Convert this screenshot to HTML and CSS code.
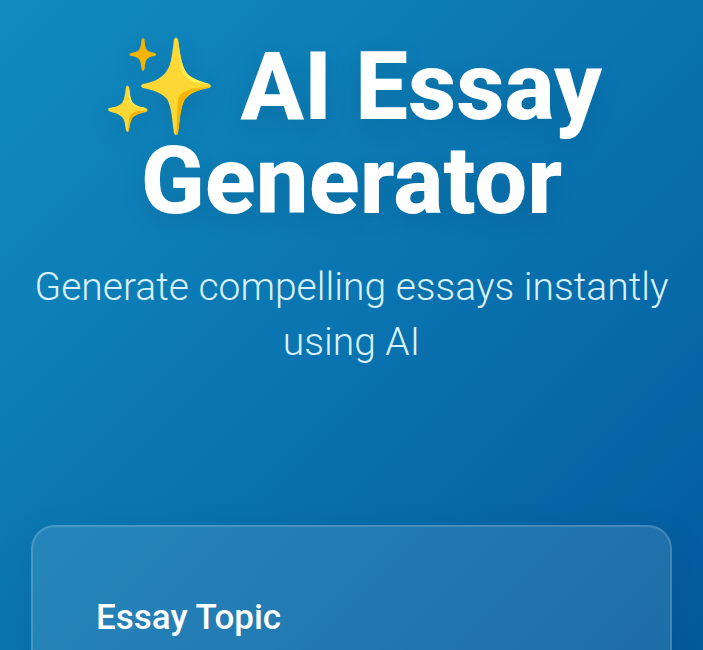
FILE: index.html
```html
<!DOCTYPE html>
<html lang="en">
<head>
<meta charset="utf-8">
<meta name="viewport" content="width=device-width, initial-scale=1">
<title>AI Essay Generator</title>
<link rel="stylesheet" href="styles.css">
</head>
<body>
<main class="page">
  <header class="hero">
    <h1 class="title"><svg class="sparkles" viewBox="0 0 104 100" aria-hidden="true">
      <defs>
        <linearGradient id="shine" x1="0" y1="0" x2="0" y2="1">
          <stop offset="0.2" stop-color="#fdd835"/>
          <stop offset="0.8" stop-color="#fff055"/>
        </linearGradient>
      </defs>
      <path fill="#fdd835" d="M66 3.500Q68-.5 70 3.500C72 17 73 28 78 36C83 43 92 45 101 48Q105 50 101 52C90 54 82 57 77 63C72 72 72 84 70 97Q68 101 66 97C64 84 64 72 59 63C54 57 45 54 35 52Q31 50 35 48C45 46 53 43 58 36C64 28 64 17 66 3.500Z"/>
      <path fill="url(#shine)" d="M70 3.500C72 17 73 28 78 36C83 43 92 45 101 48C91 48 82 46 76 39C70 30 71 15 70 3.500Z"/>
      <path fill="#f4b400" d="M102 51C90 54 82 57 77 63C72 72 72 84 70 97Q69 99 68 99C70 86 68 68 71 61C76 52 90 52 102 51Z"/>
      <path fill="#fdd835" d="M18 51Q19.500 48 21 51C22 58 22 63 25 67C29 71 34 71 38 72Q41 74 38 76C33 77 29 78 25 81C22 85 22 89 21 94Q19.500 98 18 94C17 89 17 84 14 81C10 77 5 77 1 75Q-1 74 1 72C6 71 10 71 14 67C17 62 17 58 18 51Z"/>
      <path fill="#ffee58" d="M21 51C22 58 22 63 25 67C29 71 34 71 38 72C32 73 27 72 23 68C20 63 21 57 21 51Z"/>
      <path fill="#f4b400" d="M39 75C33 77 29 78 25 81C22 85 22 89 21 94L20 96C21 89 20 83 23 78C27 74 33 75 39 75Z"/>
      <path fill="#f4b400" d="M33.500 3.500Q35 1 36.500 3.500C37 8 37 12 39 14C41 16 44 16 47 17Q49 18.500 47 20C44 20 41 21 39 23C37 26 37 29 36.500 33Q35 37 33.500 33C33 29 33 26 31 23C29 21 26 20 23 20Q20 18.500 23 17C26 16 29 16 31 14C33 11 33 8 33.500 3.500Z"/>
    </svg> AI Essay Generator</h1>
    <p class="subtitle">Generate compelling essays instantly using AI</p>
  </header>
  <form class="card">
    <label class="label" for="topic">Essay Topic</label>
    <input class="field" id="topic" type="text">
  </form>
</main>
</body>
</html>
```
FILE: styles.css
```css
* {
  box-sizing: border-box;
}

html {
  height: 100%;
}

body {
  margin: 0;
  height: 100%;
  overflow: hidden;
  font-family: Roboto, "Liberation Sans", sans-serif;
  color: #fff;
  background: linear-gradient(135deg, #118bc0 0%, #0a74b0 50%, #035a9e 100%);
}

.page {
  padding: 40px 31px;
}

.hero {
  text-align: center;
  margin-bottom: 155px;
}

.title {
  margin: 0 0 32px;
  font-size: 94px;
  line-height: 94px;
  font-weight: 800;
  text-shadow: 0 8px 24px rgba(0, 0, 0, 0.1);
}

.sparkles {
  width: 104px;
  height: 100px;
  margin: -6px 5px -4px 7px;
  vertical-align: -13px;
  filter: drop-shadow(0 8px 12px rgba(0, 0, 0, 0.1));
}

.subtitle {
  margin: 0;
  font-size: 39px;
  line-height: 55px;
  font-weight: 300;
  color: #d9f1fc;
}

.card {
  padding: 63px;
  border: 2px solid rgba(255, 255, 255, 0.16);
  border-radius: 24px;
  background: rgba(255, 255, 255, 0.11);
  box-shadow: 0 16px 48px rgba(0, 0, 0, 0.08);
}

.label {
  display: block;
  margin-bottom: 16px;
  font-size: 35px;
  line-height: 56px;
  font-weight: 500;
}

.field {
  width: 100%;
  height: 96px;
  border: 2px solid rgba(255, 255, 255, 0.3);
  border-radius: 16px;
  padding: 0 32px;
  font: inherit;
  font-size: 32px;
  color: #fff;
  background: rgba(255, 255, 255, 0.1);
}
```
